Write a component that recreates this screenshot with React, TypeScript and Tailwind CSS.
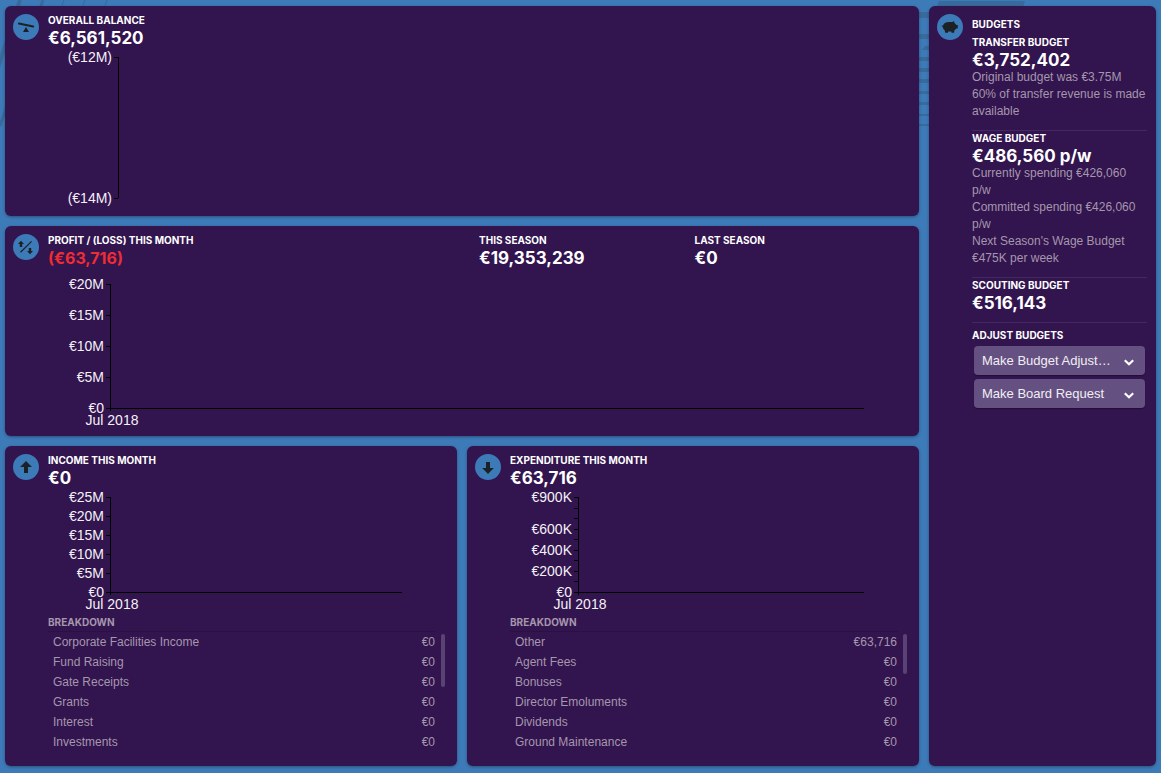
import type { ReactNode } from "react";

type Item = { name: string; value: string };
type Tick = { y: number; label?: string };

const income: Item[] = [
  { name: "Corporate Facilities Income", value: "€0" },
  { name: "Fund Raising", value: "€0" },
  { name: "Gate Receipts", value: "€0" },
  { name: "Grants", value: "€0" },
  { name: "Interest", value: "€0" },
  { name: "Investments", value: "€0" },
];

const expenditure: Item[] = [
  { name: "Other", value: "€63,716" },
  { name: "Agent Fees", value: "€0" },
  { name: "Bonuses", value: "€0" },
  { name: "Director Emoluments", value: "€0" },
  { name: "Dividends", value: "€0" },
  { name: "Ground Maintenance", value: "€0" },
];

function BalanceIcon() {
  return (
    <svg viewBox="0 0 26 26" className="size-full" aria-hidden="true">
      <path d="M5.9 9.6 20.2 12.5" stroke="#1b2125" strokeWidth="2" strokeLinecap="round" />
      <path d="M13 13 16 18h-6z" fill="#1b2125" />
    </svg>
  );
}

function ProfitIcon() {
  return (
    <svg viewBox="0 0 26 26" className="size-full" aria-hidden="true">
      <path d="M7.5 18.3 18.6 7.4" stroke="#1b2125" strokeWidth="1.2" />
      <path d="M8 6.8l3 3.2H9.2v3H6.8v-3H5zM17 20.2l-3-3.2h1.8v-3h2.4v3H20z" fill="#1b2125" />
    </svg>
  );
}

function ArrowIcon({ down = false }: { down?: boolean }) {
  return (
    <svg viewBox="0 0 26 26" className="size-full" aria-hidden="true">
      <path d={down ? "M13 20 7.2 14H11V8h4v6h3.8z" : "M13 7l6 6h-4v6h-4v-6H7z"} fill="#1b2125" />
    </svg>
  );
}

function PiggyIcon() {
  return (
    <svg viewBox="0 0 26 26" className="size-full" aria-hidden="true">
      <path
        d="M5.9 12C6.5 9.500 8.700 8 11.800 8h3.600L17 7l.5 2c.8.500 1.400 1.200 1.800 2h1.500v3.500h-1.600c-.5.800-1.100 1.400-1.700 1.700l-.4 2.600h-2.500l-.4-1.200h-3l-.4 1.200H8.200l-.6-2.800C6.500 15.200 5.900 14 5.900 12.900l-1-.4V11z"
        fill="#1b2125"
      />
    </svg>
  );
}

function Panel({ icon, label, children }: { icon: ReactNode; label: string; children: ReactNode }) {
  return (
    <section
      aria-label={label}
      className="flex gap-[9px] rounded-md bg-[#32144f] p-2 pr-[9px] shadow-[0_1px_3px_rgba(0,0,0,0.35)]"
    >
      <div className="size-[26px] shrink-0 rounded-full bg-[#3d7ab8]">{icon}</div>
      <div className="min-w-0 flex-1">{children}</div>
    </section>
  );
}

function Stat({ title, value, loss = false }: { title: string; value: string; loss?: boolean }) {
  return (
    <div className="font-[Inter,sans-serif] font-bold">
      <h2 className="text-[10px] leading-3">{title}</h2>
      <p className={loss ? "mt-[3px] text-base leading-[18px] text-[#ee2d33]" : "mt-[3px] text-[17px] leading-[18px]"}>
        {value}
      </p>
    </div>
  );
}

function Chart({
  axis,
  ticks,
  bottom,
  height,
  date,
}: {
  axis: number;
  ticks: Tick[];
  bottom: number;
  height: number;
  date?: string;
}) {
  return (
    <div className="mt-px pr-[46px]">
      <svg width="100%" height={height} className="block overflow-visible" fontSize="14">
        <g stroke="#000" shapeRendering="crispEdges">
          <line x1={axis} y1={ticks[0].y} x2={axis} y2={date ? bottom + 3 : bottom} />
          {ticks.map((t) => (
            <line key={t.y} x1={axis - 4} y1={t.y} x2={axis} y2={t.y} />
          ))}
          {date && <line x1={axis} y1={bottom} x2="100%" y2={bottom} />}
        </g>
        <g fill="#f4f1f6">
          {ticks.map(
            (t) =>
              t.label && (
                <text key={t.y} x={axis - 6} y={t.y + 5} textAnchor="end">
                  {t.label}
                </text>
              )
          )}
          {date && (
            <text x={axis + 2} y={bottom + 17} textAnchor="middle">
              {date}
            </text>
          )}
        </g>
      </svg>
    </div>
  );
}

function Breakdown({ items, thumb }: { items: Item[]; thumb: string }) {
  return (
    <div className="pr-[3px] text-[#a597ac]">
      <h3 className="mr-[9px] border-b border-[#2a1043] pb-[3px] font-[Inter,sans-serif] text-[10px] leading-3 font-bold">
        BREAKDOWN
      </h3>
      <div className="flex h-[126px] items-start overflow-hidden">
        <table className="mr-1.5 flex-1 text-xs">
          <tbody>
            {items.map((item) => (
              <tr key={item.name} className="h-5">
                <td className="p-0 pl-[5px]">{item.name}</td>
                <td className="p-0 text-right">{item.value}</td>
              </tr>
            ))}
          </tbody>
        </table>
        <div className={`mt-0.5 w-1 rounded-full bg-[#5b4274] ${thumb}`} />
      </div>
    </div>
  );
}

function Dropdown({ label, text }: { label: string; text: string }) {
  return (
    <div className="relative mx-0.5">
      <select
        aria-label={label}
        className="block h-[29px] w-full appearance-none truncate rounded bg-[#655181] pr-8 pl-2 text-[13px] text-[#f1eef4] shadow-[0_1px_1px_rgba(0,0,0,0.3)]"
      >
        <option>{text}</option>
      </select>
      <svg
        viewBox="0 0 10 7"
        className="pointer-events-none absolute top-[13px] right-[11px] h-[7px] w-2.5"
        fill="none"
        stroke="#fff"
        strokeWidth="2.2"
        aria-hidden="true"
      >
        <path d="M.8 1.2 5 5.2 9.2 1.2" />
      </svg>
    </div>
  );
}

function Backdrop() {
  return (
    <div className="absolute inset-x-0 top-0 -z-10 flex h-[130px] justify-between overflow-hidden">
      <svg width="120" height="130" fill="none" stroke="#386b9d" aria-hidden="true">
        <path d="M20 0-6 80" strokeWidth="4" />
        <path d="M43 0 0 126" strokeWidth="3" />
        <path d="M64 0 20 130M85 0 40 130M107 0 62 130" strokeWidth="1" />
      </svg>
      <svg width="261" height="130" fill="#386b9d" aria-hidden="true">
        <path d="M39 1h86l-8 24H31zM19 12h20v6H19zM19 34h20v5H19zM25 46h14v4H22zM19 57h20v4H19zM19 68h20v4H19zM19 79h20v4H19zM19 91h20v3H19zM19 102h20v3H19zM19 114h20v2H19zM19 124h20v2H19z" />
      </svg>
    </div>
  );
}

export default function App() {
  return (
    <main className="relative isolate grid min-h-screen grid-cols-[minmax(0,1fr)_227px] gap-2.5 bg-[#3d7ab8] px-[5px] pt-1.5 pb-[7px] font-['Liberation_Sans',sans-serif] text-white">
      <Backdrop />
      <div className="flex flex-col gap-2.5">
        <Panel icon={<BalanceIcon />} label="Overall balance">
          <Stat title="OVERALL BALANCE" value="€6,561,520" />
          <Chart
            axis={70}
            height={160}
            bottom={150}
            ticks={[
              { y: 9, label: "(€12M)" },
              { y: 150, label: "(€14M)" },
            ]}
          />
        </Panel>

        <Panel icon={<ProfitIcon />} label="Profit and loss">
          <div className="grid grid-cols-4">
            <div className="col-span-2">
              <Stat title="PROFIT / (LOSS) THIS MONTH" value="(€63,716)" loss />
            </div>
            <Stat title="THIS SEASON" value="€19,353,239" />
            <Stat title="LAST SEASON" value="€0" />
          </div>
          <Chart
            axis={62}
            height={160}
            bottom={140}
            date="Jul 2018"
            ticks={[
              { y: 16, label: "€20M" },
              { y: 47, label: "€15M" },
              { y: 78, label: "€10M" },
              { y: 109, label: "€5M" },
              { y: 140, label: "€0" },
            ]}
          />
        </Panel>

        <div className="grid flex-1 grid-cols-2 gap-2.5">
          <Panel icon={<ArrowIcon />} label="Income this month">
            <Stat title="INCOME THIS MONTH" value="€0" />
            <Chart
              axis={62}
              height={128}
              bottom={104}
              date="Jul 2018"
              ticks={[
                { y: 9, label: "€25M" },
                { y: 28, label: "€20M" },
                { y: 47, label: "€15M" },
                { y: 66, label: "€10M" },
                { y: 85, label: "€5M" },
                { y: 104, label: "€0" },
              ]}
            />
            <Breakdown items={income} thumb="h-[53px]" />
          </Panel>

          <Panel icon={<ArrowIcon down />} label="Expenditure this month">
            <Stat title="EXPENDITURE THIS MONTH" value="€63,716" />
            <Chart
              axis={68}
              height={128}
              bottom={104}
              date="Jul 2018"
              ticks={[
                { y: 9, label: "€900K" },
                { y: 20 },
                { y: 30 },
                { y: 41, label: "€600K" },
                { y: 51 },
                { y: 62, label: "€400K" },
                { y: 72 },
                { y: 83, label: "€200K" },
                { y: 93 },
                { y: 104, label: "€0" },
              ]}
            />
            <Breakdown items={expenditure} thumb="h-10" />
          </Panel>
        </div>
      </div>

      <Panel icon={<PiggyIcon />} label="Budgets">
        <h2 className="pt-1 pb-1.5 font-[Inter,sans-serif] text-[10px] leading-3 font-bold">BUDGETS</h2>
        <div className="border-b border-[#44285f] pb-2.5">
          <Stat title="TRANSFER BUDGET" value="€3,752,402" />
          <div className="text-xs leading-[17px] text-[#a597ac]">
            <p>Original budget was €3.75M</p>
            <p>60% of transfer revenue is made available</p>
          </div>
        </div>
        <div className="border-b border-[#44285f] pt-px pb-2.5">
          <Stat title="WAGE BUDGET" value="€486,560 p/w" />
          <div className="text-xs leading-[17px] text-[#a597ac]">
            <p>Currently spending €426,060 p/w</p>
            <p>Committed spending €426,060 p/w</p>
            <p>Next Season's Wage Budget €475K per week</p>
          </div>
        </div>
        <div className="border-b border-[#44285f] pt-px pb-2.5">
          <Stat title="SCOUTING BUDGET" value="€516,143" />
        </div>
        <h2 className="pt-1.5 pb-[5px] font-[Inter,sans-serif] text-[10px] leading-3 font-bold">ADJUST BUDGETS</h2>
        <div className="flex flex-col gap-1">
          <Dropdown label="Budget adjustment" text="Make Budget Adjustment" />
          <Dropdown label="Board request" text="Make Board Request" />
        </div>
      </Panel>
    </main>
  );
}
